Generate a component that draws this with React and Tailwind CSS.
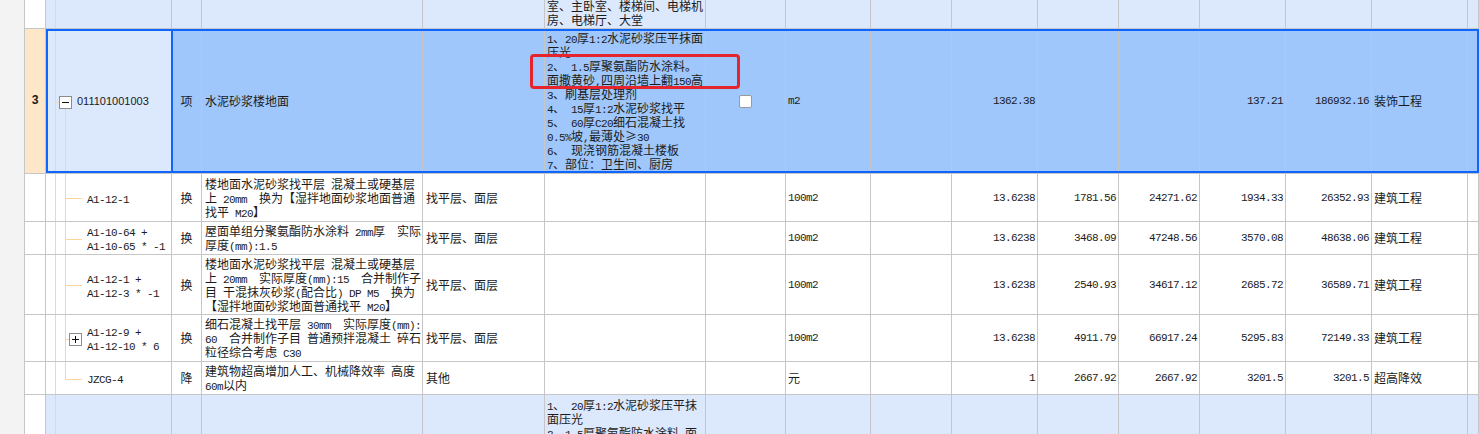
import React from "react";

const W = [
  "w-[21px]",
  "w-[126px]",
  "w-[30px]",
  "w-[221px]",
  "w-[122px]",
  "w-[161px]",
  "w-[80px]",
  "w-[85px]",
  "w-[81px]",
  "w-[86px]",
  "w-[81px]",
  "w-[81px]",
  "w-[86px]",
  "w-[86px]",
  "w-[96px]",
  "flex-1",
];

const mono = "font-['Liberation_Mono',monospace] text-[11px] tracking-[-0.6px] leading-[8px]";
const ORANGE = "#fbd49e";

// split latin runs out so they get the narrow mono face like the original
function Rich({ text }) {
  return text.split(/([ -~]+)/).map((p, i) =>
    /^[ -~]+$/.test(p) ? (
      <span key={i} className={mono}>
        {p}
      </span>
    ) : (
      p
    )
  );
}

function Lines({ lines }) {
  return (
    <div>
      {lines.map((l, i) => (
        <div key={i} className="whitespace-pre leading-[14px] h-[14px]">
          <Rich text={l} />
        </div>
      ))}
    </div>
  );
}

function Cell({ i, className = "", children }) {
  return (
    <div className={`${W[i]} shrink-0 h-full border-r border-[#c6c6c6] flex items-center overflow-hidden ${className}`}>
      {children}
    </div>
  );
}

function Tree({ h, kind }) {
  const c = Math.round(h / 2) + 0.5;
  return (
    <svg className="absolute inset-0" width="126" height={h} shapeRendering="crispEdges">
      <line x1="9.5" y1="0" x2="9.5" y2={h} stroke={ORANGE} />
      {kind === "open" && (
        <>
          <line x1="9.5" y1={c} x2="13" y2={c} stroke={ORANGE} />
          <line x1="19.5" y1={c + 6} x2="19.5" y2={h} stroke={ORANGE} />
          <rect x="13.5" y={c - 6} width="12" height="12" fill="#fff" stroke="#8c8c8c" />
          <line x1="16" y1={c} x2="23" y2={c} stroke="#111" />
        </>
      )}
      {(kind === "branch" || kind === "plus") && (
        <line x1="19.5" y1="0" x2="19.5" y2={h} stroke={ORANGE} />
      )}
      {kind === "end" && <line x1="19.5" y1="0" x2="19.5" y2={c} stroke={ORANGE} />}
      {(kind === "branch" || kind === "end") && (
        <line x1="19.5" y1={c} x2="36" y2={c} stroke={ORANGE} />
      )}
      {kind === "plus" && (
        <>
          <line x1="19.5" y1={c} x2="23" y2={c} stroke={ORANGE} />
          <rect x="23.5" y={c - 6} width="12" height="12" fill="#fff" stroke="#8c8c8c" />
          <line x1="26" y1={c} x2="33" y2={c} stroke="#111" />
          <line x1="29.5" y1={c - 4} x2="29.5" y2={c + 3} stroke="#111" />
        </>
      )}
    </svg>
  );
}

const items = [
  {
    h: 48,
    tree: "branch",
    code: ["A1-12-1"],
    type: "换",
    name: ["楼地面水泥砂浆找平层 混凝土或硬基层", "上 20mm  换为【湿拌地面砂浆地面普通", "找平 M20】"],
    feature: "找平层、面层",
    unit: "100m2",
    nums: ["", "13.6238", "1781.56", "24271.62", "1934.33", "26352.93"],
    cat: "建筑工程",
  },
  {
    h: 33,
    tree: "branch",
    code: ["A1-10-64 +", "A1-10-65 * -1"],
    type: "换",
    name: ["屋面单组分聚氨酯防水涂料 2mm厚  实际", "厚度(mm):1.5"],
    feature: "找平层、面层",
    unit: "100m2",
    nums: ["", "13.6238", "3468.09", "47248.56", "3570.08", "48638.06"],
    cat: "建筑工程",
  },
  {
    h: 60,
    tree: "branch",
    code: ["A1-12-1 +", "A1-12-3 * -1"],
    type: "换",
    name: [
      "楼地面水泥砂浆找平层 混凝土或硬基层",
      "上 20mm  实际厚度(mm):15  合并制作子",
      "目 干混抹灰砂浆(配合比) DP M5  换为",
      "【湿拌地面砂浆地面普通找平 M20】",
    ],
    feature: "找平层、面层",
    unit: "100m2",
    nums: ["", "13.6238", "2540.93", "34617.12", "2685.72", "36589.71"],
    cat: "建筑工程",
  },
  {
    h: 47,
    tree: "plus",
    code: ["A1-12-9 +", "A1-12-10 * 6"],
    type: "换",
    name: ["细石混凝土找平层 30mm  实际厚度(mm):", "60  合并制作子目 普通预拌混凝土 碎石", "粒径综合考虑 C30"],
    feature: "找平层、面层",
    unit: "100m2",
    nums: ["", "13.6238", "4911.79", "66917.24", "5295.83", "72149.33"],
    cat: "建筑工程",
  },
  {
    h: 33,
    tree: "end",
    code: ["JZCG-4"],
    type: "降",
    name: ["建筑物超高增加人工、机械降效率 高度", "60m以内"],
    feature: "其他",
    unit: "元",
    nums: ["", "1", "2667.92", "2667.92", "3201.5", "3201.5"],
    cat: "超高降效",
  },
];

const descMain = [
  "1、20厚1:2水泥砂浆压平抹面",
  "压光",
  "2、 1.5厚聚氨酯防水涂料。",
  "面撒黄砂,四周沿墙上翻150高",
  "3、刷基层处理剂",
  "4、 15厚1:2水泥砂浆找平",
  "5、 60厚C20细石混凝土找",
  "0.5%坡,最薄处≥30",
  "6、 现浇钢筋混凝土楼板",
  "7、部位：卫生间、厨房",
];

function Num({ i, v }) {
  return (
    <Cell i={i} className="justify-end pr-[2px]">
      <span className={mono}>{v}</span>
    </Cell>
  );
}

export default function App() {
  return (
    <div className="flex h-[434px] w-[1479px] overflow-hidden bg-white text-[12px] text-[#1b1b1b] font-['Noto_Sans_CJK_SC','Liberation_Sans',sans-serif]">
      <div className="w-[25px] shrink-0 bg-[#f3f3f3] border-r border-[#c6c6c6]" />
      <div className="flex-1 flex flex-col">
        {/* clipped row above */}
        <div className="flex h-[29px] shrink-0 border-b border-[#c6c6c6] bg-[#dce8fc]">
          <Cell i={0} className="bg-white" />
          <Cell i={1} className="relative">
            <Tree h={29} kind="line" />
          </Cell>
          <Cell i={2} />
          <Cell i={3} />
          <Cell i={4} />
          <Cell i={5} className="items-end pl-[2px] pb-[1px]">
            <Lines lines={["室、主卧室、楼梯间、电梯机", "房、电梯厅、大堂"]} />
          </Cell>
          {[6, 7, 8, 9, 10, 11, 12, 13, 14, 15].map((i) => (
            <Cell key={i} i={i} />
          ))}
        </div>

        {/* selected row */}
        <div className="relative flex h-[145px] shrink-0 border-b border-[#c6c6c6] bg-[#9fc7fb]">
          <Cell i={0} className="bg-[#fee6c9] justify-center">
            <span className="font-['Liberation_Mono',monospace] text-[12px] font-bold">3</span>
          </Cell>
          <Cell i={1} className="relative bg-[#dce8fc] pl-[31px]">
            <Tree h={145} kind="open" />
            <span className="relative font-['Liberation_Sans',sans-serif] text-[11px]">011101001003</span>
          </Cell>
          <Cell i={2} className="justify-center">项</Cell>
          <Cell i={3} className="pl-[3px]">水泥砂浆楼地面</Cell>
          <Cell i={4} />
          <Cell i={5} className="pl-[2px]">
            <Lines lines={descMain} />
          </Cell>
          <Cell i={6} className="justify-center">
            <div className="w-[13px] h-[13px] bg-white border border-[#9a9a9a] rounded-[2px]" />
          </Cell>
          <Cell i={7} className="pl-[2px]">
            <span className={mono}>m2</span>
          </Cell>
          <Cell i={8} />
          <Num i={9} v="1362.38" />
          <Cell i={10} />
          <Cell i={11} />
          <Num i={12} v="137.21" />
          <Num i={13} v="186932.16" />
          <Cell i={14} className="pl-[2px]">装饰工程</Cell>
          <Cell i={15} />
          <div className="pointer-events-none absolute left-[21px] right-0 inset-y-0 border-2 border-[#0e66fe]" />
          <div className="pointer-events-none absolute left-[21px] w-[127px] inset-y-0 border-2 border-[#0e66fe]" />
          <div className="pointer-events-none absolute left-[505px] top-[25px] w-[210px] h-[35px] border-[3px] border-[#e5242c] rounded-[4px]" />
        </div>

        {items.map((it, r) => (
          <div
            key={r}
            className={`flex shrink-0 border-b border-[#c6c6c6] bg-white ${
              ["h-[48px]", "h-[33px]", "h-[60px]", "h-[47px]", "h-[33px]"][r]
            }`}
          >
            <Cell i={0} />
            <Cell i={1} className="relative pl-[41px]">
              <Tree h={it.h} kind={it.tree} />
              <div className="relative">
                <Lines lines={it.code} />
              </div>
            </Cell>
            <Cell i={2} className="justify-center">{it.type}</Cell>
            <Cell i={3} className="pl-[3px]">
              <Lines lines={it.name} />
            </Cell>
            <Cell i={4} className="pl-[3px]">{it.feature}</Cell>
            <Cell i={5} />
            <Cell i={6} />
            <Cell i={7} className="pl-[2px]">
              <Rich text={it.unit} />
            </Cell>
            {it.nums.map((v, k) => (
              <Num key={k} i={8 + k} v={v} />
            ))}
            <Cell i={14} className="pl-[2px]">{it.cat}</Cell>
            <Cell i={15} />
          </div>
        ))}

        {/* next item, cut off at the bottom */}
        <div className="flex h-[80px] shrink-0 bg-[#dce8fc]">
          <Cell i={0} className="bg-white" />
          <Cell i={1} className="relative">
            <Tree h={80} kind="line" />
          </Cell>
          <Cell i={2} />
          <Cell i={3} />
          <Cell i={4} />
          <Cell i={5} className="items-start pl-[2px] pt-[3px]">
            <Lines lines={["1、 20厚1:2水泥砂浆压平抹", "面压光", "2、1.5厚聚氨酯防水涂料,面"]} />
          </Cell>
          {[6, 7, 8, 9, 10, 11, 12, 13, 14, 15].map((i) => (
            <Cell key={i} i={i} />
          ))}
        </div>
      </div>
    </div>
  );
}
